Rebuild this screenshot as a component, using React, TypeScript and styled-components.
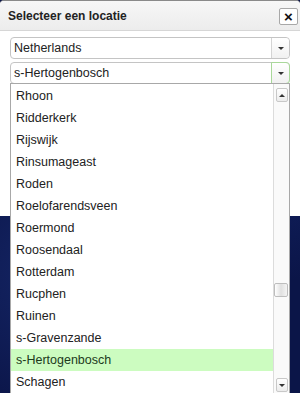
import { ReactElement } from "react";
import styled, { createGlobalStyle } from "styled-components";

const cities = [
  "Rhoon",
  "Ridderkerk",
  "Rijswijk",
  "Rinsumageast",
  "Roden",
  "Roelofarendsveen",
  "Roermond",
  "Roosendaal",
  "Rotterdam",
  "Rucphen",
  "Ruinen",
  "s-Gravenzande",
  "s-Hertogenbosch",
  "Schagen",
];

const selectedCity = "s-Hertogenbosch";

export default function App(): ReactElement {
  return (
    <>
      <GlobalStyle />
      <Page>
        <Dialog>
          <TitleBar>
            <Title>Selecteer een locatie</Title>
            <CloseButton>×</CloseButton>
          </TitleBar>
          <Body>
            <Select>
              <SelectValue>Netherlands</SelectValue>
              <SelectArrow>
                <ArrowDown />
              </SelectArrow>
            </Select>
            <Select>
              <SelectValue>s-Hertogenbosch</SelectValue>
              <SelectArrow focused>
                <ArrowDown />
              </SelectArrow>
            </Select>
          </Body>
        </Dialog>

        <DropdownList>
          <Options>
            {cities.map((city) => (
              <Option key={city} selected={city === selectedCity}>
                {city}
              </Option>
            ))}
          </Options>
          <Scrollbar>
            <ScrollButton>
              <ArrowUp />
            </ScrollButton>
            <Track>
              <Thumb />
            </Track>
            <ScrollButton>
              <ArrowDown />
            </ScrollButton>
          </Scrollbar>
        </DropdownList>
      </Page>
    </>
  );
}

const GlobalStyle = createGlobalStyle`
  html, body {
    margin: 0;
    padding: 0;
    background: #0b1548;
  }
  body {
    font-family: "Liberation Sans", Arial, sans-serif;
    font-size: 12.5px;
    color: #222;
  }
`;

const Page = styled.div`
  position: relative;
  width: 300px;
  height: 393px;
  overflow: hidden;
  background:
    radial-gradient(circle at 20% 70%, rgba(40, 70, 160, 0.35), transparent 40%),
    radial-gradient(circle at 90% 40%, rgba(30, 60, 150, 0.3), transparent 35%),
    #0b1548;
`;

const Dialog = styled.div`
  display: flex;
  flex-direction: column;
  width: 300px;
  height: 216px;
  background: #fff;
  border-top: 1px solid #8a8a8a;
  border-radius: 4px 4px 0 0;
  box-sizing: border-box;
`;

const TitleBar = styled.div`
  display: flex;
  align-items: center;
  justify-content: space-between;
  height: 29px;
  padding: 0 2px 0 8px;
  background: linear-gradient(#f7f7f7, #ececec);
  border-bottom: 1px solid #d6d6d6;
  border-radius: 4px 4px 0 0;
`;

const Title = styled.span`
  font-size: 12px;
  font-weight: bold;
  color: #222;
`;

const CloseButton = styled.div`
  display: flex;
  align-items: center;
  justify-content: center;
  width: 17px;
  height: 15px;
  margin-top: 2px;
  background: #fff;
  border: 1px solid #a8a8a8;
  border-radius: 2px;
  font-size: 15px;
  font-weight: bold;
  line-height: 1;
  color: #111;
`;

const Body = styled.div`
  display: flex;
  flex-direction: column;
  gap: 3px;
  padding: 6px 10px 0;
`;

const Select = styled.div`
  display: flex;
  height: 20px;
  border: 1px solid #c4c4c4;
  border-radius: 4px;
  background: #fff;
`;

const SelectValue = styled.div`
  flex: 1;
  display: flex;
  align-items: center;
  padding-left: 3px;
  color: #222;
`;

const SelectArrow = styled.div<{ focused?: boolean }>`
  display: flex;
  align-items: center;
  justify-content: center;
  width: 17px;
  margin: ${(p) => (p.focused ? "-1px -1px -1px 0" : "0")};
  border: ${(p) => (p.focused ? "1px solid #a9d89a" : "none")};
  border-left: 1px solid ${(p) => (p.focused ? "#a9d89a" : "#d4d4d4")};
  border-radius: 0 4px 4px 0;
  background: linear-gradient(#fff, #f1f1f1);
`;

const ArrowDown = styled.span`
  width: 0;
  height: 0;
  border-left: 3px solid transparent;
  border-right: 3px solid transparent;
  border-top: 3px solid #333;
`;

const ArrowUp = styled.span`
  width: 0;
  height: 0;
  border-left: 3px solid transparent;
  border-right: 3px solid transparent;
  border-bottom: 3px solid #333;
`;

const DropdownList = styled.div`
  position: absolute;
  top: 83px;
  left: 10px;
  display: flex;
  width: 280px;
  height: 310px;
  box-sizing: border-box;
  background: #fff;
  border: 1px solid #a8a8a8;
  border-bottom: none;
  overflow: hidden;
`;

const Options = styled.div`
  flex: 1;
  display: flex;
  flex-direction: column;
  padding-top: 1px;
`;

const Option = styled.div<{ selected?: boolean }>`
  height: 22px;
  line-height: 22px;
  padding-left: 5px;
  white-space: nowrap;
  color: ${(p) => (p.selected ? "#1c3a1c" : "#222")};
  background: ${(p) => (p.selected ? "#ccfcc0" : "transparent")};
`;

const Scrollbar = styled.div`
  display: flex;
  flex-direction: column;
  width: 16px;
  padding: 4px 1px 1px 0;
  border-left: 1px solid #dcdcdc;
  background: #fafafa;
  box-sizing: border-box;
`;

const ScrollButton = styled.div`
  display: flex;
  align-items: center;
  justify-content: center;
  height: 12px;
  margin-left: 2px;
  background: linear-gradient(#fff, #ececec);
  border: 1px solid #c8c8c8;
  border-radius: 2px;
`;

const Track = styled.div`
  flex: 1;
  display: flex;
  flex-direction: column;
  justify-content: flex-start;
  padding-top: 181px;
`;

const Thumb = styled.div`
  height: 12px;
  background: linear-gradient(90deg, #fff, #e0e0e0 50%, #f4f4f4);
  border: 1px solid #bdbdbd;
  border-radius: 2px;
`;
